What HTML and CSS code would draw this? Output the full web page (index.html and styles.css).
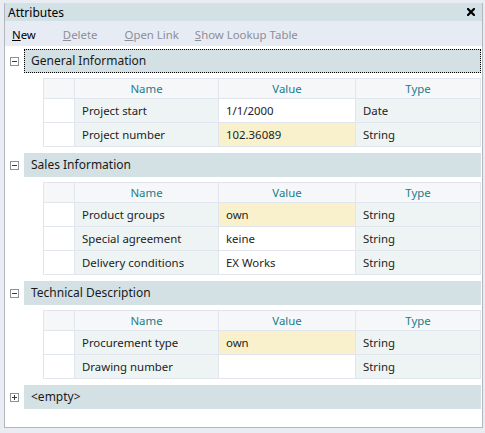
FILE: index.html
```html
<!DOCTYPE html>
<html>
<head>
    <title>Attributes</title>
    <link rel="stylesheet" href="styles.css">
</head>
<body>
    <div class="panel">
        <div class="titlebar">
            <span class="title">Attributes</span>
            <svg class="close" width="8" height="8" viewBox="0 0 8 8">
                <path d="M1 1 L7 7 M7 1 L1 7" stroke="#000" stroke-width="2.2" stroke-linecap="square"/>
            </svg>
        </div>

        <div class="toolbar">
            <span class="tool"><u>N</u>ew</span>
            <span class="tool disabled"><u>D</u>elete</span>
            <span class="tool disabled tool-open"><u>O</u>pen Link</span>
            <span class="tool disabled"><u>S</u>how Lookup Table</span>
        </div>

        <div class="content">
            <!-- General Information -->
            <div class="group">
                <div class="group-row">
                    <span class="expander minus"></span>
                    <div class="group-head focused">General Information</div>
                </div>
                <div class="grid">
                    <div class="cell head sel"></div>
                    <div class="cell head">Name</div>
                    <div class="cell head">Value</div>
                    <div class="cell head">Type</div>

                    <div class="cell sel"></div>
                    <div class="cell name">Project start</div>
                    <div class="cell value">1/1/2000</div>
                    <div class="cell type">Date</div>

                    <div class="cell sel"></div>
                    <div class="cell name">Project number</div>
                    <div class="cell value mark">102.36089</div>
                    <div class="cell type">String</div>
                </div>
            </div>

            <!-- Sales Information -->
            <div class="group">
                <div class="group-row">
                    <span class="expander minus"></span>
                    <div class="group-head">Sales Information</div>
                </div>
                <div class="grid">
                    <div class="cell head sel"></div>
                    <div class="cell head">Name</div>
                    <div class="cell head">Value</div>
                    <div class="cell head">Type</div>

                    <div class="cell sel"></div>
                    <div class="cell name">Product groups</div>
                    <div class="cell value mark">own</div>
                    <div class="cell type">String</div>

                    <div class="cell sel"></div>
                    <div class="cell name">Special agreement</div>
                    <div class="cell value">keine</div>
                    <div class="cell type">String</div>

                    <div class="cell sel"></div>
                    <div class="cell name">Delivery conditions</div>
                    <div class="cell value">EX Works</div>
                    <div class="cell type">String</div>
                </div>
            </div>

            <!-- Technical Description -->
            <div class="group">
                <div class="group-row">
                    <span class="expander minus"></span>
                    <div class="group-head">Technical Description</div>
                </div>
                <div class="grid">
                    <div class="cell head sel"></div>
                    <div class="cell head">Name</div>
                    <div class="cell head">Value</div>
                    <div class="cell head">Type</div>

                    <div class="cell sel"></div>
                    <div class="cell name">Procurement type</div>
                    <div class="cell value mark">own</div>
                    <div class="cell type">String</div>

                    <div class="cell sel"></div>
                    <div class="cell name">Drawing number</div>
                    <div class="cell value"></div>
                    <div class="cell type">String</div>
                </div>
            </div>

            <!-- leer -->
            <div class="group">
                <div class="group-row">
                    <span class="expander plus"></span>
                    <div class="group-head">&lt;empty&gt;</div>
                </div>
            </div>
        </div>
    </div>
</body>
</html>
```

FILE: styles.css
```css
body {
    margin: 0;
    height: 433px;
    background-color: #e9ecf2;
    font-family: 'Noto Sans', 'Liberation Sans', sans-serif;
    font-size: 11.4px;
    color: #1c1c24;
    overflow: hidden;
}

.panel {
    margin: 3px 2px 0 4px;
    height: 424px;
    border: 1px solid #b3b6bb;
    border-top: none;
    background-color: #ffffff;
    display: flex;
    flex-direction: column;
}

.titlebar {
    height: 18px;
    background-color: #d1e1e5;
    display: flex;
    align-items: center;
    justify-content: space-between;
    padding: 1px 7px 0 3px;
    box-sizing: border-box;
}

.title {
    color: #000;
    font-size: 12px;
}

.close {
    margin-top: -2px;
}

.toolbar {
    height: 25px;
    background-color: #e7ebf4;
    display: flex;
    align-items: center;
    padding-left: 7px;
    padding-top: 2px;
    box-sizing: border-box;
}

.tool {
    margin-right: 27px;
    color: #000;
}

.tool-open {
    margin-right: 16px;
}

.disabled {
    color: #8d8f94;
}

.content {
    flex: 1;
    padding-top: 3px;
}

.group-row {
    display: flex;
    align-items: center;
}

.expander {
    width: 7px;
    height: 7px;
    border: 1px solid #8e9196;
    margin: 0 5px 0 5px;
    position: relative;
    background-color: #fff;
}

.expander::before {
    content: '';
    position: absolute;
    left: 1px;
    top: 3px;
    width: 5px;
    height: 1px;
    background-color: #3a3a3a;
}

.plus::after {
    content: '';
    position: absolute;
    left: 3px;
    top: 1px;
    width: 1px;
    height: 5px;
    background-color: #3a3a3a;
}

.group-head {
    flex: 1;
    height: 24px;
    line-height: 24px;
    background-color: #d3e1e5;
    padding-left: 7px;
    margin-right: 1px;
    box-sizing: border-box;
    color: #1a1a1a;
    font-size: 12px;
}

.focused {
    border: 1px dotted #000;
    padding-left: 6px;
    line-height: 22px;
}

.grid {
    display: grid;
    grid-template-columns: 31px 144px 137px 125px;
    margin: 5px 1px 6px 38px;
    border-left: 1px solid #e1e6ee;
    border-top: 1px solid #e1e6ee;
}

.cell {
    height: 24px;
    line-height: 23px;
    padding-left: 7px;
    box-sizing: border-box;
    border-right: 1px solid #e1e6ee;
    border-bottom: 1px solid #e1e6ee;
    white-space: nowrap;
    overflow: hidden;
}

.head {
    height: 20px;
    line-height: 19px;
    padding-left: 0;
    text-align: center;
    background-color: #f6f7f8;
    color: #1a7d8c;
}

.sel {
    background-color: #ffffff;
}

.head.sel {
    background-color: #f6f7f8;
}

.name,
.type {
    background-color: #edf4f3;
}

.value {
    background-color: #ffffff;
}

.mark {
    background-color: #f8f1cb;
}
```
